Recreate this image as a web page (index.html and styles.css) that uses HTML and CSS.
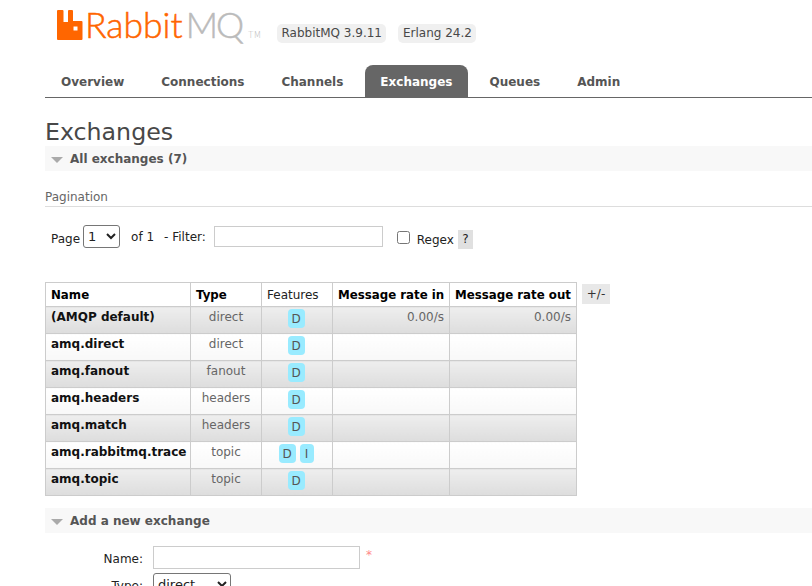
FILE: index.html
```html
<!DOCTYPE html>
<html lang="en">
<head>
    <meta charset="UTF-8">
    <meta name="viewport" content="width=device-width, initial-scale=1.0">
    <title>RabbitMQ Management</title>
    <link rel="stylesheet" href="styles.css">
</head>
<body>
    <div class="header">
        <div class="logo">
            <svg class="logo-mark" width="26" height="30" viewBox="0 0 26 30">
                <path fill="#ff6600" fill-rule="evenodd" d="M1 0h4.500a1 1 0 0 1 1 1v11h4.500V1a1 1 0 0 1 1-1h3a1 1 0 0 1 1 1v10h8.500a1 1 0 0 1 1 1v17a1 1 0 0 1-1 1H1a1 1 0 0 1-1-1V1a1 1 0 0 1 1-1zM16.500 16.500v4h4v-4z"/>
            </svg>
            <span class="logo-rabbit">Rabbit</span><span class="logo-mq">MQ</span><span class="logo-tm">TM</span>
        </div>
        <span class="version first">RabbitMQ 3.9.11</span>
        <span class="version">Erlang 24.2</span>
    </div>

    <ul class="tabs">
        <li>Overview</li>
        <li>Connections</li>
        <li>Channels</li>
        <li class="selected">Exchanges</li>
        <li>Queues</li>
        <li>Admin</li>
    </ul>

    <h1>Exchanges</h1>

    <div class="section-title"><span class="arrow"></span>All exchanges (7)</div>

    <h3>Pagination</h3>

    <div class="pagination">
        <label class="lbl-page">Page</label>
        <select class="sel-page"><option>1</option></select>
        <span class="lbl-of">of 1</span>
        <label class="lbl-filter">- Filter:</label>
        <input type="text" class="filter-input">
        <input type="checkbox" class="regex-check">
        <label class="lbl-regex">Regex</label>
        <span class="help">?</span>
    </div>

    <div class="table-wrap">
        <table>
            <thead>
                <tr>
                    <th class="c-name">Name</th>
                    <th class="c-type">Type</th>
                    <th class="c-feat">Features</th>
                    <th class="c-in">Message rate in</th>
                    <th class="c-out">Message rate out</th>
                </tr>
            </thead>
            <tbody>
                <tr class="odd">
                    <td class="name">(AMQP default)</td><td class="center">direct</td>
                    <td class="center"><abbr>D</abbr></td><td class="rate">0.00/s</td><td class="rate">0.00/s</td>
                </tr>
                <tr class="even">
                    <td class="name">amq.direct</td><td class="center">direct</td>
                    <td class="center"><abbr>D</abbr></td><td></td><td></td>
                </tr>
                <tr class="odd">
                    <td class="name">amq.fanout</td><td class="center">fanout</td>
                    <td class="center"><abbr>D</abbr></td><td></td><td></td>
                </tr>
                <tr class="even">
                    <td class="name">amq.headers</td><td class="center">headers</td>
                    <td class="center"><abbr>D</abbr></td><td></td><td></td>
                </tr>
                <tr class="odd">
                    <td class="name">amq.match</td><td class="center">headers</td>
                    <td class="center"><abbr>D</abbr></td><td></td><td></td>
                </tr>
                <tr class="even">
                    <td class="name">amq.rabbitmq.trace</td><td class="center">topic</td>
                    <td class="center"><abbr>D</abbr><abbr>I</abbr></td><td></td><td></td>
                </tr>
                <tr class="odd">
                    <td class="name">amq.topic</td><td class="center">topic</td>
                    <td class="center"><abbr>D</abbr></td><td></td><td></td>
                </tr>
            </tbody>
        </table>
        <span class="plus-minus">+/-</span>
    </div>

    <div class="section-title add"><span class="arrow"></span>Add a new exchange</div>

    <div class="form-row name-row">
        <label>Name:</label>
        <input type="text" class="name-input">
        <span class="mand">*</span>
    </div>
    <div class="form-row">
        <label>Type:</label>
        <select class="type-select"><option>direct</option></select>
    </div>
</body>
</html>
```

FILE: styles.css
```css
html, body {
    overflow: hidden;
    height: 100%;
}
body {
    margin: 0;
    padding: 0 0 0 45px;
    font-family: "DejaVu Sans", sans-serif;
    font-size: 12px;
    color: #484848;
    background: white;
}
.header {
    display: flex;
    align-items: flex-start;
    height: 65px;
}
.logo {
    display: flex;
    align-items: flex-start;
    width: 232px;
    padding: 10px 0 0 12px;
    box-sizing: border-box;
    font-family: "Lato", sans-serif;
    font-weight: 300;
    font-size: 35.5px;
    -webkit-text-stroke: 0.5px;
    line-height: 30px;
    white-space: nowrap;
}
.logo-mark {
    flex-shrink: 0;
    margin-right: 2px;
}
.logo-rabbit {
    color: #ff6600;
}
.logo-mq {
    color: #bbb;
    margin-left: 3px;
    letter-spacing: -2px;
}
.logo-tm {
    color: #bbb;
    font-size: 9px;
    -webkit-text-stroke: 0;
    line-height: 10px;
    font-family: "DejaVu Sans", sans-serif;
    margin: 20px 0 0 6px;
}
.version {
    margin: 24px 0 0 12px;
    padding: 0 4.5px;
    height: 19px;
    line-height: 19px;
    background: #f0f0f0;
    border-radius: 5px;
    white-space: nowrap;
}
.version.first {
    margin-left: 0;
}

.tabs {
    display: flex;
    list-style: none;
    margin: 0;
    padding: 0 0 0 1px;
    height: 32px;
    border-bottom: 1px solid #666;
}
.tabs li {
    padding: 0 15px;
    margin-right: 7px;
    line-height: 35px;
    font-size: 12px;
    font-weight: bold;
    color: #555;
    white-space: nowrap;
}
.tabs li.selected {
    padding-right: 16px;
    margin-right: 6px;
    background: #666;
    color: white;
    border-radius: 8px 8px 0 0;
}

h1 {
    margin: 21px 0 0;
    font-size: 23.7px;
    font-weight: normal;
    line-height: 27px;
    color: #484848;
}
.section-title {
    height: 25px;
    padding-top: 1px;
    box-sizing: border-box;
    background: #f8f8f8;
    font-size: 12px;
    font-weight: bold;
    color: #555;
    display: flex;
    align-items: center;
}
.arrow {
    width: 0;
    height: 0;
    margin: 1px 7px 0 6px;
    border-left: 6px solid transparent;
    border-right: 6px solid transparent;
    border-top: 6px solid #aaa;
}
h3 {
    margin: 18px 0 0;
    height: 17px;
    line-height: 16px;
    font-size: 12px;
    font-weight: normal;
    color: #666;
    border-bottom: 1px solid #ddd;
}

.pagination {
    display: flex;
    align-items: flex-start;
    height: 75px;
    padding: 18px 0 0 6px;
    box-sizing: border-box;
    color: #222;
}
.pagination label, .lbl-of {
    white-space: nowrap;
}
.lbl-page {
    margin: 7px 3px 0 0;
}
.sel-page {
    width: 37px;
    height: 23px;
    font-family: inherit;
    font-size: 13px;
    color: #222;
    background: white;
    border: 1px solid #767676;
    border-radius: 3px;
}
.lbl-of {
    margin: 5px 0 0 11px;
}
.lbl-filter {
    margin: 5px 0 0 10px;
}
.filter-input {
    width: 169px;
    height: 21px;
    margin: 1px 0 0 8px;
    padding: 0 4px;
    box-sizing: border-box;
    border: 1px solid #ccc;
}
.regex-check {
    width: 13px;
    height: 13px;
    margin: 6px 0 0 14px;
}
.lbl-regex {
    margin: 8px 0 0 7px;
}
.help {
    margin: 5px 0 0 4px;
    width: 15px;
    height: 19px;
    line-height: 19px;
    text-align: center;
    background: #e0e0e0;
}

.table-wrap {
    position: relative;
    width: 767px;
    height: 226px;
}
table {
    border-collapse: collapse;
    table-layout: fixed;
    width: 531px;
    color: #666;
}
th, td {
    border: 1px solid #ccc;
    padding: 0 5px;
    vertical-align: top;
    white-space: nowrap;
    box-sizing: border-box;
}
th {
    height: 23px;
    padding-top: 1px;
    line-height: 22px;
    text-align: left;
    font-size: 11.8px;
    font-weight: bold;
    color: #000;
    background: white;
}
th.c-feat {
    font-size: 12px;
    font-weight: normal;
    color: #222;
}
.c-name { width: 145px; }
.c-type { width: 71px; }
.c-feat { width: 71px; }
.c-in { width: 117px; }
.c-out { width: 127px; }
td {
    height: 27px;
    padding-top: 1px;
    line-height: 19px;
}
tr.odd td {
    background: linear-gradient(#eeeeee, #dddddd);
}
tr.even td {
    background: linear-gradient(#ffffff, #f8f8f8);
}
td.name {
    font-size: 12px;
    font-weight: bold;
    color: #111;
}
td.center {
    text-align: center;
}
td.rate {
    text-align: right;
}
abbr {
    display: inline-block;
    width: 17px;
    height: 19px;
    margin: 1px 3px 0 1px;
    line-height: 20px;
    text-align: center;
    background: #99ebff;
    border-radius: 4px;
    color: #555;
}
abbr + abbr {
    width: 14px;
}
.plus-minus {
    position: absolute;
    left: 537px;
    top: 2px;
    width: 28px;
    height: 20px;
    line-height: 20px;
    text-align: center;
    background: #e8e8e8;
    color: #333;
}

.form-row {
    display: flex;
    align-items: flex-start;
    height: 30px;
}
.name-row {
    margin-top: 13px;
    height: 27px;
}
.form-row label {
    width: 98px;
    margin-top: 6px;
    text-align: right;
    color: #222;
}
.name-input {
    width: 207px;
    height: 23px;
    margin-left: 10px;
    box-sizing: border-box;
    border: 1px solid #ccc;
}
.mand {
    margin: 2px 0 0 6px;
    color: #f88;
}
.type-select {
    width: 78px;
    height: 23px;
    margin-left: 10px;
    font-family: inherit;
    font-size: 13px;
    color: #222;
    background: white;
    border: 1px solid #767676;
    border-radius: 3px;
}
```
